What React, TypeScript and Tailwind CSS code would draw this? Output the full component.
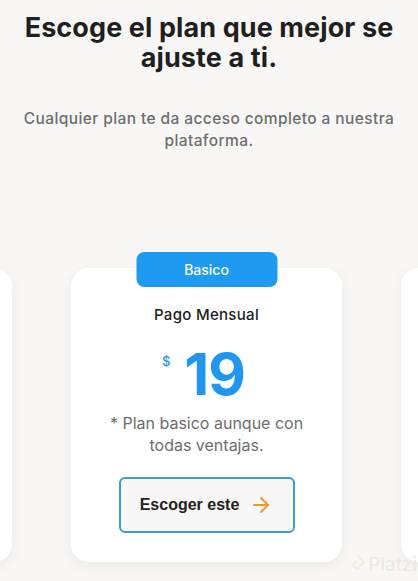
import React from "react";
import { ArrowRight } from "lucide-react";

function SideCard() {
  return <div className="w-[271px] h-[294px] shrink-0 rounded-[18px] bg-white shadow-[0_4px_14px_rgba(0,0,0,0.06)]" />;
}

export default function App() {
  return (
    <div
      className="relative w-[418px] h-[581px] overflow-hidden bg-[#f8f7f5]"
      style={{ fontFamily: "Inter, 'Noto Sans', sans-serif" }}
    >
      <h1 className="pt-[13px] px-2 text-center text-[27px] leading-[30px] font-bold text-[#1f1f1f] tracking-[0.1px]">
        Escoge el plan que mejor se ajuste a ti.
      </h1>
      <p className="mt-[35px] px-3 text-center text-[15.5px] leading-[22px] font-medium text-[#6d6d6d] tracking-[0.4px]">
        Cualquier plan te da acceso completo a nuestra plataforma.
      </p>

      <div className="mt-[116px] flex justify-center gap-[59px] pr-[5px]">
        <SideCard />
        <div className="relative w-[271px] h-[294px] shrink-0 rounded-[18px] bg-white shadow-[0_4px_14px_rgba(0,0,0,0.06)] flex flex-col items-center pt-[36px]">
          <div className="absolute top-[-16px] left-1/2 -translate-x-1/2 w-[141px] h-[35px] rounded-[8px] bg-[#1e9bf0] flex items-center justify-center text-white text-[14px] font-medium">
            Basico
          </div>
          <div className="text-[15px] leading-[22px] font-medium text-[#1d1d1d] tracking-[0.3px]">Pago Mensual</div>
          <div className="mt-[17px] flex items-start gap-[14px] text-[#2196f0] pr-[6px]">
            <span className="text-[13px] leading-none mt-[12px] font-medium">$</span>
            <span className="text-[58px] leading-[62px] font-bold tracking-[-1px]">19</span>
          </div>
          <p className="mt-[7px] px-6 text-center text-[16px] leading-[22px] text-[#6d6d6d]">
            * Plan basico aunque con todas ventajas.
          </p>
          <button
            className="mt-[21px] w-[176px] h-[56px] rounded-[6px] border-2 border-[#3d9bd8] bg-[#f7f7f7] flex items-center justify-center gap-[10px] text-[16px] font-bold text-[#222]"
            style={{ fontFamily: "'Liberation Sans', Arial, sans-serif" }}
          >
            Escoger este
            <ArrowRight size={24} strokeWidth={2} color="#ee9a2f" />
          </button>
        </div>
        <SideCard />
      </div>

      <div className="absolute right-[1px] bottom-[7px] flex items-center gap-[3px] text-[#e9e8e3]">
        <svg width="16" height="20" viewBox="0 0 16 20">
          <path d="M8 1 L15 8 L8 15 L4 11 L8 7" fill="none" stroke="#eef0e4" strokeWidth="2.5" strokeLinejoin="round" />
        </svg>
        <span className="text-[19px] leading-none">Platzi</span>
      </div>
    </div>
  );
}
